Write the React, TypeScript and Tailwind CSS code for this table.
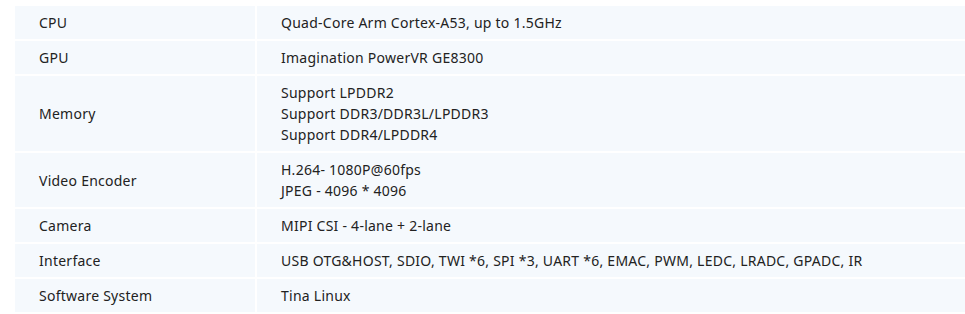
const rows: { label: string; value: string[] }[] = [
  { label: "CPU", value: ["Quad-Core Arm Cortex-A53, up to 1.5GHz"] },
  { label: "GPU", value: ["Imagination PowerVR GE8300"] },
  {
    label: "Memory",
    value: ["Support LPDDR2", "Support DDR3/DDR3L/LPDDR3", "Support DDR4/LPDDR4"],
  },
  { label: "Video Encoder", value: ["H.264- 1080P@60fps", "JPEG - 4096 * 4096"] },
  { label: "Camera", value: ["MIPI CSI - 4-lane + 2-lane"] },
  {
    label: "Interface",
    value: ["USB OTG&HOST, SDIO, TWI *6, SPI *3, UART *6, EMAC, PWM, LEDC, LRADC, GPADC, IR"],
  },
  { label: "Software System", value: ["Tina Linux"] },
];

export default function App() {
  return (
    <div className="w-[965px] h-[314px] overflow-hidden bg-white pl-[13px] pt-[4px] font-['Noto_Sans',sans-serif] text-[14px] leading-[21px] tracking-[0.25px] text-[#222]">
      <table className="w-[956px] border-separate border-spacing-[2px]">
        <tbody>
          {rows.map((row) => (
            <tr key={row.label}>
              <td className="w-[240px] bg-[#f5f9fd] py-[6px] pl-[24px] align-middle">{row.label}</td>
              <td className="bg-[#f5f9fd] py-[6px] pl-[24px] align-middle">
                {row.value.map((line) => (
                  <div key={line}>{line}</div>
                ))}
              </td>
            </tr>
          ))}
        </tbody>
      </table>
    </div>
  );
}
